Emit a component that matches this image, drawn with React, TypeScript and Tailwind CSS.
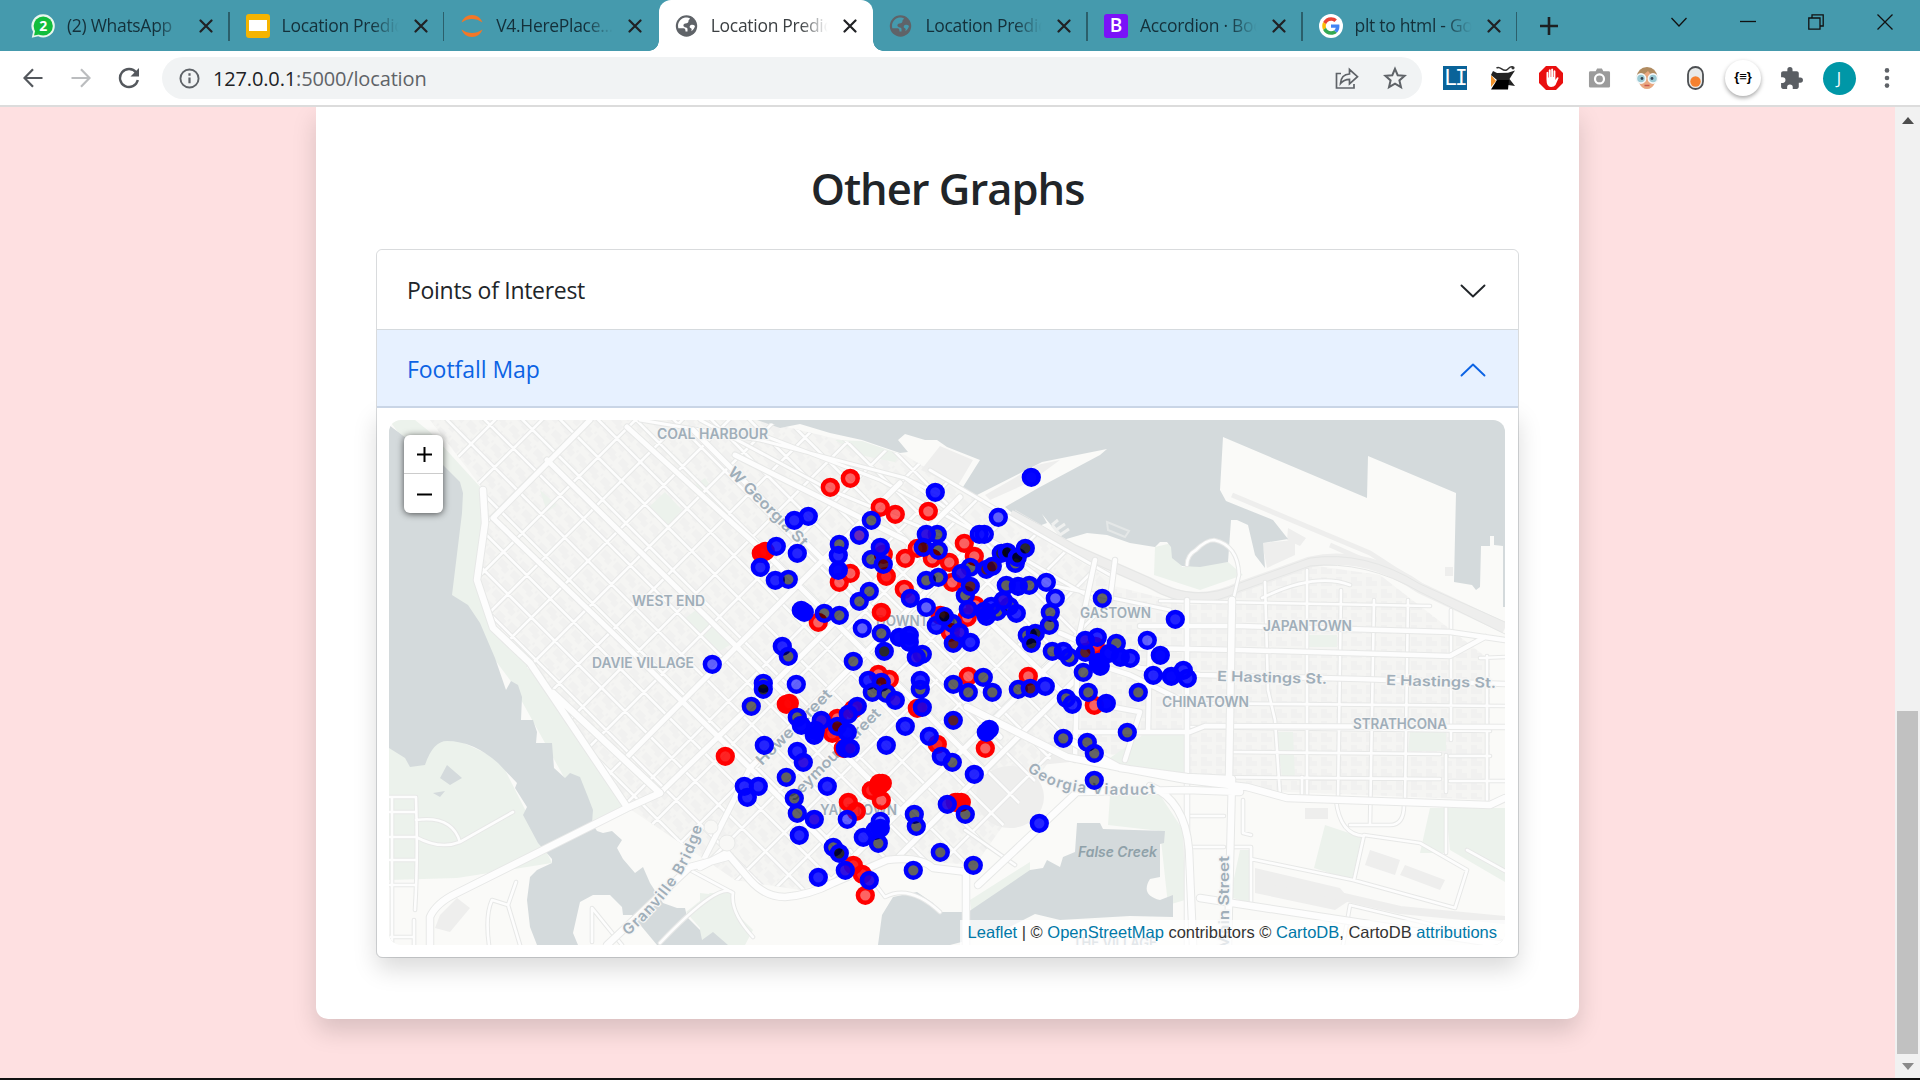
import React from "react";

type Kind = "r" | "R" | "k" | "K" | "b" | "B" | "S" | "P" | "p" | "m";
type Marker = [number, number, Kind];

const STYLE: Record<Kind, { ring: string; fill: string; o: number }> = {
  r: { ring: "#ff0000", fill: "#ff0000", o: 0.6 },
  R: { ring: "#ff0000", fill: "#ff0000", o: 0.86 },
  k: { ring: "#0000ff", fill: "#000000", o: 0.6 },
  K: { ring: "#0000ff", fill: "#000008", o: 0.84 },
  b: { ring: "#0000ff", fill: "#0000ff", o: 0.6 },
  B: { ring: "#0000ff", fill: "#0000ff", o: 0.85 },
  S: { ring: "#0000ff", fill: "#0000ff", o: 0.98 },
  P: { ring: "#0000ff", fill: "#2200dd", o: 0.93 },
  p: { ring: "#0000ff", fill: "#4a00a8", o: 0.82 },
  m: { ring: "#0000ff", fill: "#420010", o: 0.88 },
};

const MARKERS: Marker[] = [
  [830, 487, "r"], [850, 478, "r"], [880, 507, "r"], [895, 514, "r"], [928, 511, "r"], [761, 553, "R"], [765, 551, "R"],
  [839, 582, "r"], [850, 573, "r"], [883, 554, "r"], [886, 576, "R"], [905, 558, "r"], [917, 548, "r"], [932, 558, "r"], [949, 562, "r"],
  [904, 589, "r"], [952, 582, "r"], [881, 612, "R"], [818, 622, "r"], [940, 615, "r"], [964, 543, "r"], [974, 556, "r"],
  [967, 617, "r"], [975, 605, "r"], [950, 632, "r"], [968, 676, "r"], [1028, 676, "r"], [1095, 646, "R"], [878, 674, "r"], [889, 679, "r"],
  [786, 704, "R"], [789, 703, "R"], [837, 718, "r"], [832, 733, "R"], [843, 748, "r"], [725, 756, "R"], [917, 708, "R"],
  [937, 744, "R"], [853, 709, "r"], [871, 790, "R"], [878, 787, "R"], [879, 783, "R"], [882, 783, "R"], [881, 800, "r"],
  [848, 802, "R"], [856, 811, "R"], [955, 802, "R"], [957, 802, "R"], [961, 802, "R"], [853, 865, "R"], [862, 874, "R"],
  [865, 895, "r"], [985, 748, "r"], [1094, 705, "r"],
  [935, 492, "B"], [794, 520, "B"], [808, 516, "B"], [871, 520, "k"], [859, 535, "p"], [776, 546, "B"], [797, 553, "B"],
  [760, 567, "B"], [775, 580, "B"], [788, 579, "k"], [839, 544, "k"], [838, 555, "B"], [838, 570, "S"], [880, 547, "P"],
  [871, 559, "k"], [883, 564, "m"], [937, 534, "k"], [926, 534, "P"], [923, 547, "m"], [938, 550, "k"], [869, 591, "k"],
  [859, 601, "k"], [926, 580, "k"], [938, 577, "k"], [910, 598, "P"], [926, 607, "b"], [801, 610, "S"], [804, 612, "S"],
  [824, 613, "k"], [839, 615, "k"], [862, 628, "b"], [881, 633, "k"], [884, 651, "K"], [899, 637, "S"], [909, 635, "S"],
  [909, 642, "S"], [922, 654, "k"], [916, 657, "P"], [853, 661, "k"], [782, 646, "B"], [788, 656, "k"], [712, 664, "b"],
  [952, 623, "k"], [936, 625, "B"], [944, 616, "K"],
  [1031, 477, "S"], [998, 517, "b"], [984, 534, "b"], [979, 534, "B"], [1001, 553, "K"], [1007, 552, "K"], [1015, 563, "k"],
  [1017, 557, "K"], [1025, 548, "K"], [970, 567, "k"], [961, 573, "P"], [986, 569, "m"], [992, 566, "m"], [965, 595, "k"],
  [970, 586, "m"], [1006, 585, "k"], [1029, 585, "k"], [1018, 586, "S"], [1046, 582, "b"], [1055, 598, "b"], [1050, 612, "k"],
  [1049, 625, "k"], [1102, 598, "k"], [1175, 619, "B"], [1147, 640, "b"], [1160, 655, "S"], [968, 609, "P"], [997, 611, "k"],
  [991, 606, "B"], [986, 616, "S"], [984, 611, "B"], [1009, 606, "k"], [1003, 600, "P"], [1016, 613, "B"], [1027, 635, "k"],
  [1035, 633, "K"], [1031, 643, "K"], [1052, 651, "k"], [1069, 657, "k"], [1063, 651, "B"], [1085, 652, "m"], [1085, 640, "P"],
  [1097, 637, "B"], [1116, 643, "k"], [1109, 653, "S"], [1098, 662, "S"], [1100, 666, "S"], [1120, 657, "S"], [1130, 658, "B"],
  [1083, 672, "k"], [1088, 692, "k"], [1138, 692, "k"], [1153, 675, "B"], [1171, 676, "S"], [1187, 678, "B"], [1183, 670, "B"],
  [953, 643, "m"], [970, 642, "B"], [959, 632, "P"], [920, 689, "k"], [920, 680, "B"], [953, 684, "k"], [983, 677, "k"],
  [968, 692, "k"], [992, 692, "k"], [1018, 689, "k"], [1030, 688, "m"], [1045, 686, "B"], [1066, 698, "k"], [1072, 704, "B"],
  [1106, 703, "S"], [763, 683, "k"], [763, 689, "K"], [796, 684, "b"], [751, 706, "k"], [797, 717, "k"], [801, 725, "S"],
  [821, 720, "P"], [815, 730, "B"], [814, 735, "S"], [857, 706, "P"], [848, 714, "P"], [837, 726, "m"], [847, 732, "S"],
  [845, 748, "S"], [850, 748, "P"], [764, 745, "B"], [797, 751, "B"], [803, 762, "P"], [868, 680, "B"], [881, 682, "m"],
  [872, 692, "k"], [886, 693, "k"], [895, 700, "P"], [922, 707, "P"], [905, 726, "B"], [886, 745, "B"], [929, 736, "B"],
  [952, 762, "k"], [941, 756, "B"], [953, 720, "m"], [786, 777, "k"], [744, 786, "B"], [758, 786, "B"], [747, 797, "B"],
  [794, 798, "k"], [827, 786, "B"], [797, 813, "k"], [814, 819, "P"], [799, 835, "B"], [847, 819, "b"], [880, 821, "b"],
  [880, 828, "S"], [875, 830, "S"], [863, 837, "B"], [878, 843, "k"], [914, 814, "k"], [916, 826, "k"], [947, 804, "P"],
  [833, 847, "k"], [839, 853, "K"], [845, 870, "P"], [869, 880, "P"], [818, 877, "B"], [913, 870, "k"], [940, 852, "k"],
  [974, 774, "B"], [965, 814, "k"], [973, 865, "k"], [1039, 823, "B"], [986, 732, "S"], [989, 729, "S"], [1063, 738, "k"],
  [1087, 742, "k"], [1094, 753, "k"], [1127, 732, "k"], [1094, 780, "k"],
];

/* Street network. Diagonal streets run at 45 degrees through downtown. */
const crossStreets = Array.from({ length: 23 }, (_, i) => 915 + i * 46.8);
const longStreets = Array.from({ length: 26 }, (_, i) => 443 - i * 37.8);
const minorDiagonals =
  crossStreets.map((s) => `M${s - 990} 990L${s - 400} 400`).join("") +
  longStreets.map((d) => `M${400 + d} 400L${990 + d} 990`).join("");
const majorDiagonals =
  "M493 518L590 420M627 757L777 606L900 483M660 793L777 680L960 497M750 768L985 533M493 518L620 640L760 778L870 888M547 460L733 643L905 815M627 427L773 560L985 772M693 430L860 597L1000 737M735 455L905 540L1060 690M840 870L1075 640M880 875L1105 650M700 867L750 768";
const eastStreets =
  "M1160 601L1430 606M1170 703L1505 706M1187 727L1490 731M1230 752L1440 754M1490 756H1450M1187 777L1440 779M1450 781H1505M1265 582L1268 690L1275 720L1280 795M1307 570V795M1341 590L1338 800M1374 600L1370 825M1408 600L1405 800M1451 610V740M1446 755V792M1487 656V803M1302 777V798M1336 800Q1340 835 1364 836M1404 805Q1404 825 1390 825H1350M1446 806V853M1232 847H1251V905M1243 800V833L1251 835M1251 859L1353 880L1455 908L1467 870L1420 843L1364 835L1354 880M1343 945L1350 905L1505 942M1467 850L1505 871M1262 598Q1315 572 1350 585M1187 565Q1187 555 1196 550Q1206 540 1214 540Q1238 545 1239 575L1232 605M1480 658L1505 657M1190 816H1224M1190 847H1224";
const eastMajor =
  "M1140 626L1240 626L1450 632L1505 640M1140 648L1240 650L1450 656L1485 637M1060 633L1140 668L1200 675L1360 679L1505 684M1187 600V945M1020 640L1130 675L1187 703M1095 560L1078 640L1075 760M1115 560L1110 600M1150 640L1148 732M1107 706L1140 712L1125 760M1075 732L1190 732L1205 726L1505 727";
const bigRoads =
  "M430 945V917Q436 903 457 893L627 808L660 793M607 945L690 867L727 857M700 867L727 853L750 880Q765 897 785 897Q810 895 833 883L887 860Q920 856 933 868L967 872M966 870V945M967 707L1067 757L1117 767L1187 780L1247 787L1287 798L1490 805L1505 798M1060 735L1120 768L1187 777L1228 779M1232 779L1228 945M1232 600L1229 779M978 885L1077 792L1187 790L1240 792M1150 786Q1185 800 1189 850L1193 945M483 490L485 523L477 580L493 628L530 663L553 697L627 807M553 693L660 793M1200 898L1505 945";
const sideRoads =
  "M389 797H416Q418 860 415 910M392 797V945M389 812H416M389 837H416M389 860H416M389 885H416M414 945V920M389 937H414M416 820Q452 815 460 842L513 812M416 837Q440 850 460 842M489 945Q485 915 492 900L508 905L520 945M508 905L516 882M592 942V908L622 945M660 943Q720 880 733 893Q730 912 753 937M733 893L690 870M965 830L1015 865M1025 735L1045 748M940 912Q910 884 885 897L850 850";

function Roads({ d, w, clip }: { d: string; w: number; clip?: string }) {
  return (
    <g fill="none" strokeLinecap="round" strokeLinejoin="round" clipPath={clip}>
      <path d={d} stroke="#e7e8e7" strokeWidth={w + 2} />
      <path d={d} stroke="#fdfdfd" strokeWidth={w} />
    </g>
  );
}

function MapLabel({ x, y, w, children, size = 14, rotate = 0, italic = false }: {
  x: number; y: number; w: number; children: string; size?: number; rotate?: number; italic?: boolean;
}) {
  return (
    <text
      x={x} y={y} textLength={w} lengthAdjust="spacingAndGlyphs" fontSize={size} fontWeight={600}
      fontStyle={italic ? "italic" : undefined} fill={italic ? "#8fa1a9" : "#a0aeb9"}
      stroke="#f6f6f5" strokeWidth={italic ? 0 : 2.5} paintOrder="stroke"
      transform={rotate ? `rotate(${rotate} ${x} ${y})` : undefined}
    >
      {children}
    </text>
  );
}

function FootfallMap() {
  return (
    <svg viewBox="389 420 1116 525" className="block h-full w-full" fontFamily="Inter, 'Open Sans', sans-serif">
      <defs>
        <clipPath id="downtown">
          <path d="M430 420H757L905 455L1035 535L1112 580L1090 640L1085 700L1050 760L975 865L900 860L800 890L735 880L627 807L553 697L493 628L477 580L485 523L480 485Z" />
        </clipPath>
        <pattern id="lots" width="17" height="13" patternUnits="userSpaceOnUse" patternTransform="rotate(44)">
          <rect width="17" height="13" fill="#f5f5f3" />
          <path d="M1 1h9v3h4v6h-6v-2H1zM14 0h2v3h-2z" fill="#f1f1f0" />
        </pattern>
        <pattern id="eastLots" width="15" height="12" patternUnits="userSpaceOnUse">
          <rect width="15" height="12" fill="#f5f5f3" />
          <path d="M1 1h6v4h5v5H1z" fill="#f1f1f0" />
        </pattern>
        <path id="viaduct" d="M1027 770Q1050 792 1098 794T1160 793" />
        <path id="granville" d="M628 936Q692 880 704 818" />
      </defs>
      <rect x="389" y="420" width="1116" height="525" fill="#fafaf8" />
      <path d="M430 420H757L905 455L1035 535L1112 580L1090 640L1085 700L1050 760L975 865L900 860L800 890L735 880L627 807L553 697L493 628L477 580L485 523L480 485Z" fill="url(#lots)" />
      <path d="M1090 580L1190 605L1310 565L1380 575L1490 660L1490 800L1240 790L1130 760L1060 740Z" fill="url(#eastLots)" />

      <g fill="#ecf2ec">
        <path d="M389 420H415L430 432L483 490L485 523L477 580L493 628L530 663L553 697L627 807L590 825L560 770L510 680L450 600L460 485L400 435Z" />
        <path d="M389 748L447 735L500 760L552 863L457 878L389 880Z" />
        <path d="M649 507L665 492L682 510L665 528ZM683 620L696 610L733 643L718 652ZM540 490L557 505L547 512ZM695 485L705 478L710 485L698 493Z" />
        <path d="M835 440L862 441L900 454L895 462L860 455ZM1155 547L1172 543L1182 567L1228 562L1243 575L1200 590L1154 575Z" />
        <path d="M1309 635H1337V647H1309ZM1410 732H1446V751H1408ZM1276 732H1293L1295 778L1282 776ZM1107 760L1146 733H1187V775H1140Z" />
        <path d="M1110 795H1160L1183 830L1185 900L1168 905L1160 831L1108 825ZM1325 825L1364 838L1354 881L1314 868ZM1446 808H1505V882L1450 850ZM1430 808H1446V853H1420ZM1240 850H1249V903L1230 897Z" />
        <path d="M686 912L710 893L732 893L735 912L753 930L745 945H728L700 928ZM970 900L1030 862L1030 872L972 918ZM700 893L735 897V945H700Z" />
      </g>

      <g fill="#eeeeed">
        <ellipse cx="1010" cy="797" rx="34" ry="31" />
        <path d="M921 470L940 446L973 460L957 487ZM1037 465L1060 460L1030 482L990 500L985 495ZM1262 543L1295 540V555L1267 568ZM1445 567H1453V576H1445ZM1288 528L1306 538L1300 546L1287 540ZM1305 808H1328V819H1305ZM1255 868L1340 888L1350 900L1335 910L1255 893ZM1370 850L1400 860L1395 875L1365 865ZM1405 865L1445 880L1440 890L1400 875ZM1040 745L1070 735L1090 760L1040 765Z" />
        <path d="M440 915L457 898L470 908L450 932L435 928Z" />
      </g>

      <g fill="#d4dadc">
        <path d="M389 425L402 435L443 465L460 482L463 493L462 513L452 595L468 605L480 623L495 658L506 690L511 681L518 685L522 697L521 720L533 720L537 732L536 743L552 743L554 768L565 778L570 773L580 777L588 797L593 810L592 823L597 831L603 833L612 831L622 840L617 848L623 859L635 873L643 867L650 883L663 903L677 908L685 908L687 917L700 930L702 940L713 932L728 945H657L632 915H623L622 907L610 895H593L580 902L573 933L578 945H537L530 927L527 900L530 877L537 870L552 863V859L538 843L523 815L527 807L515 788L517 783L498 763Q473 741 447 741Q433 741 425 765L410 767L405 758L389 748Z" />
        <path d="M757 420L780 428L800 424L830 433L862 440L900 453L908 452L898 440L905 434L925 440L937 440L947 447L980 460L963 487L968 493L977 495L1042 462L1107 449L1100 455L1040 487L1005 507L1023 522L1033 528L1047 523L1042 514L1063 540L1087 533L1107 535L1130 543L1155 547L1160 542H1167L1171 547L1172 558L1182 566L1200 567L1228 562L1231 520H1237L1248 525L1255 555L1265 568L1263 543L1288 539L1273 520L1226 501L1220 490L1223 437L1367 498L1368 456L1456 493L1454 582L1472 585L1476 590L1480 587L1481 546H1490V536H1494V545L1503 546V607H1505V420Z" />
        <path d="M1077 823H1100L1103 829L1165 831L1164 843L1160 844V877L1150 879Q1140 895 1160 900L1173 895V917L1130 916L1060 920L1035 914L1000 932L950 945H878L882 915L893 897L917 892L933 903L940 912H968L1030 870L1043 868L1047 860L1060 867L1063 857L1075 852Z" />
        <path d="M440 778L447 765L462 778L450 785ZM433 793L445 791L440 797Z" />
      </g>
      <path d="M1052 525L1058 520M1056 530L1065 524M1060 535L1069 529M1052 525L1061 536" stroke="#eff0ef" strokeWidth="3" />
      <path d="M1107 522L1129 531L1125 537L1108 530Z" fill="none" stroke="#e4e7e7" strokeWidth="2" />

      <g fill="none" stroke="#eeeeed" strokeLinejoin="round">
        <path d="M1010 515L1075 550L1150 583Q1195 610 1240 587L1310 562Q1365 550 1420 588L1505 628" strokeWidth="11" />
        <path d="M1232 495L1370 553L1430 592L1480 616M1330 545L1375 565" strokeWidth="5" />
        <path d="M1270 880L1400 910L1505 920" strokeWidth="8" />
      </g>
      <g fill="none" stroke="#e5e6e5">
        <path d="M1015 510L1075 545L1150 578Q1195 605 1240 583L1310 558Q1365 550 1420 584L1505 622" strokeWidth="1" />
        <path d="M1030 530L1075 555L1150 588Q1195 615 1240 591L1310 566Q1365 560 1420 592L1505 634" strokeWidth="1" />
      </g>

      <Roads d={minorDiagonals} w={2.6} clip="url(#downtown)" />
      <Roads d={eastStreets} w={2.6} />
      <Roads d={sideRoads} w={2.6} />
      <Roads d={"M700 420L830 490L940 535M757 433L880 480L1000 545L1095 600M640 420L760 440L905 478L1050 585L1170 610M905 478L940 495M930 470L1040 535L1110 575"} w={3} />
      <Roads d={majorDiagonals} w={5} clip="url(#downtown)" />
      <Roads d={eastMajor} w={4.5} />
      <Roads d={bigRoads} w={6.5} />
      <g fill="#f8f8f6" stroke="#e9eae9" strokeWidth="1">
        <circle cx="711" cy="827" r="7" />
        <circle cx="727" cy="843" r="8" />
      </g>

      <MapLabel x={657} y={439} w={111}>COAL HARBOUR</MapLabel>
      <MapLabel x={632} y={606} w={73}>WEST END</MapLabel>
      <MapLabel x={592} y={668} w={102}>DAVIE VILLAGE</MapLabel>
      <MapLabel x={876} y={626} w={86}>DOWNTOWN</MapLabel>
      <MapLabel x={1080} y={618} w={71}>GASTOWN</MapLabel>
      <MapLabel x={1263} y={631} w={89}>JAPANTOWN</MapLabel>
      <MapLabel x={1162} y={707} w={87}>CHINATOWN</MapLabel>
      <MapLabel x={1353} y={729} w={94}>STRATHCONA</MapLabel>
      <MapLabel x={820} y={815} w={77}>YALETOWN</MapLabel>
      <MapLabel x={1073} y={948} w={84}>THE VILLAGE</MapLabel>
      <MapLabel x={1217} y={681} w={110} rotate={1.5}>E Hastings St.</MapLabel>
      <MapLabel x={1386} y={685} w={110} rotate={1.5}>E Hastings St.</MapLabel>
      <MapLabel x={727} y={473} w={106} size={15} rotate={45}>W Georgia St</MapLabel>
      <MapLabel x={762} y={766} w={100} size={15} rotate={-45}>Howe Street</MapLabel>
      <MapLabel x={794} y={802} w={124} size={15} rotate={-45}>Seymour Street</MapLabel>
      <MapLabel x={1229} y={950} w={94} rotate={-90}>Main Street</MapLabel>
      <MapLabel x={1078} y={857} w={79} italic>False Creek</MapLabel>
      <text fontSize="15" fontWeight="600" fill="#a0aeb9" stroke="#f6f6f5" strokeWidth="2.5" paintOrder="stroke">
        <textPath href="#viaduct" textLength="134" lengthAdjust="spacing">Georgia Viaduct</textPath>
      </text>
      <text fontSize="15" fontWeight="600" fill="#a0aeb9" stroke="#f6f6f5" strokeWidth="2.5" paintOrder="stroke">
        <textPath href="#granville" textLength="134" lengthAdjust="spacing">Granville Bridge</textPath>
      </text>

      {MARKERS.map(([x, y, kind], i) => {
        const s = STYLE[kind];
        return <circle key={i} cx={x + 0.3} cy={y + 0.3} r="7.4" fill={s.fill} fillOpacity={s.o} stroke={s.ring} strokeWidth="4.5" />;
      })}
    </svg>
  );
}

/* ---------- Tab strip ---------- */

const WhatsAppIcon = () => (
  <svg viewBox="0 0 24 24" className="h-6 w-6">
    <path d="M12.2.3a11.5 11.5 0 0 1 0 23.2 12 12 0 0 1-5-1.2L.8 23.8l1.3-6A11.6 11.6 0 0 1 12.2.3z" fill="#e9f7ee" />
    <circle cx="12.2" cy="12" r="9.6" fill="#12bd3c" />
    <path d="M3 21.5l1.2-5 4 4z" fill="#12bd3c" />
    <text x="12.2" y="17" textAnchor="middle" fontSize="14" fontWeight="700" fill="#fff" fontFamily="Open Sans, sans-serif">2</text>
  </svg>
);
const SlidesIcon = () => (
  <span className="flex h-6 w-6 items-center justify-center rounded-[3px] bg-[#f5b400]">
    <span className="h-[11px] w-[18px] bg-white" />
  </span>
);
const JupyterIcon = () => (
  <svg viewBox="0 0 24 24" className="h-6 w-6" fill="#f37726">
    <path d="M1.5 8.500C3 4 7 1 12 1s9 3 10.500 7.500C19 6 15.500 5 12 5S5 6 1.500 8.500zM1.500 15.500C3 20 7 23 12 23s9-3 10.500-7.500C19 18 15.500 19 12 19s-7-1-10.500-3.500z" />
  </svg>
);
const GlobeIcon = () => (
  <svg viewBox="0 0 24 24" className="h-6 w-6">
    <circle cx="11.500" cy="12" r="10.700" fill="#5f6368" />
    <path d="M10 3.500c-4 .8-7 4.400-7 8.500l.3 2.200h5.200c1.800 0 2 1.600 2 3.300h2v-2.400c0-1.400-1.200-1.600-2.600-1.900-1.800-.4-2.200-3 .4-3.600 2.200-.5 3.300-1 3.200-2.800 0-1 1.500-1.200 1.500-2.200C13.500 3.500 12 3.300 10 3.500zM16 11c-1.500.5-1.800 2.500-.5 3 1.300.4 1.500 1.500.7 3.300 1.900-1.300 3.400-3.200 3.800-5.400-1-.9-2.600-1.400-4-.9z" fill="currentColor" />
  </svg>
);
const BootstrapIcon = () => (
  <span className="flex h-6 w-6 items-center justify-center rounded-[3px] bg-[#7a12f8] font-['Open_Sans'] text-[19px] leading-none font-semibold text-white">B</span>
);
const GoogleIcon = () => (
  <svg viewBox="0 0 24 24" className="h-6 w-6">
    <circle cx="12" cy="12" r="12" fill="#fff" />
    <g transform="translate(3.200 3.200) scale(.367)">
      <path fill="#EA4335" d="M24 9.500c3.540 0 6.710 1.220 9.210 3.600l6.850-6.850C35.900 2.380 30.470 0 24 0 14.620 0 6.510 5.380 2.560 13.220l7.980 6.190C12.430 13.720 17.740 9.500 24 9.500z" />
      <path fill="#4285F4" d="M46.980 24.550c0-1.570-.15-3.090-.38-4.550H24v9.020h12.940c-.58 2.960-2.260 5.480-4.780 7.180l7.730 6c4.510-4.180 7.090-10.360 7.090-17.650z" />
      <path fill="#FBBC05" d="M10.530 28.590c-.48-1.450-.76-2.990-.76-4.590s.27-3.140.76-4.590l-7.980-6.190C.92 16.460 0 20.120 0 24s.92 7.540 2.560 10.780l7.970-6.190z" />
      <path fill="#34A853" d="M24 48c6.480 0 11.930-2.130 15.890-5.810l-7.730-6c-2.150 1.450-4.920 2.300-8.160 2.300-6.260 0-11.570-4.220-13.470-9.910l-7.980 6.190C6.510 42.620 14.620 48 24 48z" />
    </g>
  </svg>
);

interface TabInfo { title: string; icon: React.ReactNode; active?: boolean; divider?: boolean }
const TABS: TabInfo[] = [
  { title: "(2) WhatsApp", icon: <WhatsAppIcon />, divider: true },
  { title: "Location Prediction", icon: <SlidesIcon />, divider: true },
  { title: "V4.HerePlace...", icon: <JupyterIcon /> },
  { title: "Location Prediction", icon: <GlobeIcon />, active: true },
  { title: "Location Prediction", icon: <GlobeIcon />, divider: true },
  { title: "Accordion · Bootstrap", icon: <BootstrapIcon />, divider: true },
  { title: "plt to html - Google", icon: <GoogleIcon />, divider: true },
];

function Tab({ title, icon, active, divider }: TabInfo) {
  return (
    <div className={`relative flex h-[51px] w-[214.6px] shrink-0 items-center pl-[16px] ${active ? "rounded-t-xl bg-white text-white" : "text-[#459aad]"}`}>
      {active && (
        <>
          <span className="absolute bottom-0 -left-[10px] h-[10px] w-[10px] bg-[radial-gradient(circle_at_0_0,transparent_9.5px,white_10px)]" />
          <span className="absolute -right-[10px] bottom-0 h-[10px] w-[10px] bg-[radial-gradient(circle_at_100%_0,transparent_9.5px,white_10px)]" />
        </>
      )}
      <span className="shrink-0">{icon}</span>
      <span className={`ml-3 w-[119px] overflow-hidden text-[17.500px] tracking-[-0.300px] whitespace-nowrap [mask-image:linear-gradient(to_right,black_75%,transparent_98%)] ${active ? "text-[#3c4043]" : "text-[#14303a]"}`}>
        {title}
      </span>
      <svg viewBox="0 0 14 14" className="ml-[13px] h-[14px] w-[14px]" stroke="#202124" strokeWidth="2.200" strokeLinecap="round">
        <path d="M1.500 1.500l11 11M12.500 1.500l-11 11" />
      </svg>
      {divider && <span className="absolute top-3 right-0 h-[29px] w-[1.500px] bg-[#2b5f6b]" />}
    </div>
  );
}

function TabStrip() {
  return (
    <div className="flex h-[51px] bg-[#459aad] pl-[15px]">
      {TABS.map((t, i) => <Tab key={i} {...t} />)}
      <svg viewBox="0 0 18 18" className="mt-[17px] ml-[23px] h-[18px] w-[18px]" stroke="#1d2022" strokeWidth="2.600"><path d="M9 0v18M0 9h18" /></svg>
      <div className="mt-[14px] ml-auto flex gap-[52.600px] pr-[27px]">
        <svg viewBox="0 0 16 16" className="h-4 w-4" fill="none" stroke="#111" strokeWidth="1.300"><path d="M.5 4L8 12l7.500-8" /></svg>
        <svg viewBox="0 0 16 16" className="h-4 w-4" stroke="#111" strokeWidth="1.300"><path d="M0 7.500h16" /></svg>
        <svg viewBox="0 0 16 16" className="h-4 w-4" fill="none" stroke="#111" strokeWidth="1.300"><path d="M.8 4h11.200v11.200H.8zM4 4V.8h11.200V12H12" /></svg>
        <svg viewBox="0 0 16 16" className="h-4 w-4" fill="none" stroke="#111" strokeWidth="1.300"><path d="M.5.500l15 15M15.500.500l-15 15" /></svg>
      </div>
    </div>
  );
}

/* ---------- Toolbar ---------- */

function Slot({ children }: { children: React.ReactNode }) {
  return <span className="flex h-10 w-12 shrink-0 items-center justify-center">{children}</span>;
}

function Toolbar() {
  return (
    <div className="flex h-[56px] items-center border-b-2 border-[#dcdcdc] bg-white pl-[9px]">
      <Slot>
        <svg viewBox="0 0 20 20" className="h-5 w-5" fill="none" stroke="#54585d" strokeWidth="2.200"><path d="M19.500 10H2M10 1.200L1.500 10l8.500 8.800" /></svg>
      </Slot>
      <Slot>
        <svg viewBox="0 0 20 20" className="h-5 w-5" fill="none" stroke="#bbbdbf" strokeWidth="2.200"><path d="M.5 10H18M10 1.200L18.500 10 10 18.800" /></svg>
      </Slot>
      <Slot>
        <svg viewBox="0 0 22 22" className="h-[22px] w-[22px]" fill="none" stroke="#54585d" strokeWidth="2.400">
          <path d="M18.200 5.600A9 9 0 1 0 19.800 13" /><path d="M21 1v8.500h-8.500z" fill="#54585d" stroke="none" />
        </svg>
      </Slot>
      <div className="ml-[9px] flex h-[42px] w-[1260px] items-center rounded-full bg-[#f1f3f4] pl-[17px]">
        <svg viewBox="0 0 22 22" className="h-[21px] w-[21px]" fill="none" stroke="#5f6368" strokeWidth="2"><circle cx="11" cy="11" r="9.500" /><path d="M11 10v6M11 5.500v2.500" strokeWidth="2.300" /></svg>
        <span className="mt-px ml-[13px] text-[20px] tracking-[-0.150px] text-[#5f6368]"><span className="text-[#202124]">127.0.0.1</span>:5000/location</span>
        <svg viewBox="0 0 24 24" className="mr-[24px] ml-auto h-6 w-6" fill="none" stroke="#5f6368" strokeWidth="1.700">
          <path d="M6 7.500H1.500v14.500h17.500v-4M5.500 17.500c.4-6 3.600-9.300 9-9.500V3.500l8 7.200-8 7.200v-4.600c-4 0-6.600 1.200-9 4.200z" />
        </svg>
        <svg viewBox="0 0 24 24" className="mr-[15px] h-6 w-6" fill="none" stroke="#5f6368" strokeWidth="2"><path d="M12 2.800l2.700 6.400 6.900.6-5.200 4.600 1.600 6.800-6-3.600-6 3.600 1.600-6.800-5.200-4.600 6.900-.6z" /></svg>
      </div>
      <div className="ml-[9px] flex">
        <Slot>
          <span className="flex h-6 w-6 items-center justify-center bg-[#0a6399] font-['DejaVu_Sans_Mono'] text-[21px] leading-none tracking-[-2px] text-white">LI</span>
        </Slot>
        <Slot>
          <svg viewBox="0 0 24 24" className="h-6 w-6">
            <path d="M0 9l5 6-5 6z" fill="#f0922b" />
            <path d="M2 5l4 2 11-.2 7-2.300L21 9l-2.500 4L24 20l-7-1-1 2-13-.3L6 14 0 9z" fill="#222" />
            <path d="M0 23.500L6 14h12l-1 9.500z" fill="#000" />
            <path d="M5.500 2c4-2.500 6 4 10 2 2.500-1.500 3-4 6.500-3" fill="none" stroke="#333" strokeWidth="1.500" /><circle cx="22" cy="1.800" r="1.600" fill="#333" />
          </svg>
        </Slot>
        <Slot>
          <svg viewBox="0 0 24 24" className="h-6 w-6">
            <path d="M7 0h10l7 7v10l-7 7H7l-7-7V7z" fill="#e90f0f" />
            <path d="M7.500 13.500V6.500q1-1.400 1.800 0v5h.5V4q1-1.400 1.900 0v7h.5V3.300q1-1.400 1.900 0V11h.5V5q1-1.300 1.800 0v9l1.600-2.500q1.200-.8 1.600.4L16.500 19q-1.500 2-4.500 2-4.500 0-4.500-7.500z" fill="#fff" />
          </svg>
        </Slot>
        <Slot>
          <svg viewBox="0 0 24 22" className="h-[22px] w-[23px]"><path d="M2.500 4H8l1.500-3h5L16 4h5.500a1.500 1.500 0 0 1 1.500 1.500v14a1.500 1.500 0 0 1-1.500 1.500h-19A1.500 1.500 0 0 1 1 19.500v-14A1.500 1.500 0 0 1 2.500 4z" fill="#9b9b9b" /><circle cx="12" cy="12" r="4.700" fill="none" stroke="#fff" strokeWidth="2.300" /></svg>
        </Slot>
        <Slot>
          <svg viewBox="0 0 24 24" className="h-6 w-6">
            <path d="M12 1q9 .5 10.500 10l-2 4h-17l-2-4Q3 1.500 12 1z" fill="#b08b60" />
            <path d="M4 11Q9 9 13 5q3 4.500 7 6v6q-3 6-8 6t-8-6z" fill="#e9a880" />
            <g fill="#9ccbd5" stroke="#f4f8fa" strokeWidth="1.600"><circle cx="6" cy="12.500" r="4.600" /><circle cx="18" cy="12.500" r="4.600" /></g>
            <circle cx="7" cy="12.500" r="1.400" fill="#345" /><circle cx="17" cy="12.500" r="1.400" fill="#345" />
            <path d="M9.500 19.500h5" stroke="#c8574e" strokeWidth="1.500" />
          </svg>
        </Slot>
        <Slot>
          <svg viewBox="0 0 17 24" className="h-6 w-[17px]"><rect x="1" y="1" width="15" height="22" rx="7.500" fill="#e9ebea" stroke="#4c4f52" strokeWidth="1.800" /><circle cx="8.500" cy="15.500" r="5.200" fill="#f5812f" /></svg>
        </Slot>
        <Slot>
          <span className="flex h-9 w-9 shrink-0 items-center justify-center rounded-full bg-white pb-0.5 font-['Liberation_Sans'] text-[13px] font-bold text-black shadow-[0_2px_4px_rgba(0,0,0,0.350)]">{"{≡}"}</span>
        </Slot>
        <Slot>
          <svg viewBox="0 0 24 24" className="h-[25px] w-[25px]" fill="#5a5e63"><path d="M20.500 11H19V7c0-1.100-.9-2-2-2h-4V3.500a2.500 2.500 0 0 0-5 0V5H4c-1.100 0-2 .9-2 2v3.800h1.500a2.700 2.700 0 0 1 0 5.400H2V20c0 1.100.9 2 2 2h3.800v-1.500a2.700 2.700 0 0 1 5.400 0V22H17c1.100 0 2-.9 2-2v-4h1.500a2.500 2.500 0 0 0 0-5z" /></svg>
        </Slot>
        <Slot>
          <span className="flex h-[33px] w-[33px] items-center justify-center rounded-full bg-[#0097a7] text-[16px] text-white">J</span>
        </Slot>
        <Slot>
          <svg viewBox="0 0 6 20" className="h-5 w-[6px]" fill="#5f6368"><circle cx="3" cy="2.400" r="2.300" /><circle cx="3" cy="10" r="2.300" /><circle cx="3" cy="17.600" r="2.300" /></svg>
        </Slot>
      </div>
    </div>
  );
}

/* ---------- Page ---------- */

function Chevron({ up }: { up?: boolean }) {
  return (
    <svg viewBox="0 0 26 14" className="h-[14px] w-[26px]" fill="none" stroke={up ? "#0c63e4" : "#212529"} strokeWidth="1.900" strokeLinecap="round" strokeLinejoin="round">
      <path d={up ? "M1.500 12.500L13 1.500l11.500 11" : "M1.500 1.500L13 12.500l11.500-11"} />
    </svg>
  );
}

function Link({ children }: { children: string }) {
  return <a className="text-[#0078a8]">{children}</a>;
}

export default function App() {
  return (
    <div className="flex h-[1080px] w-[1920px] flex-col overflow-hidden bg-[#111] font-['Open_Sans','Noto_Sans',sans-serif]">
      <TabStrip />
      <Toolbar />
      <div className="flex h-[971px] bg-[#fee0e1]">
        <main className="flex flex-1 items-start justify-center overflow-hidden">
          <section className="h-[912px] w-[1263px] rounded-b-xl bg-white px-[60px] shadow-[0_12px_24px_rgba(0,0,0,0.150)]">
            <h2 className="mt-[52px] text-center text-[43.500px] leading-[60px] font-semibold tracking-[-1px] text-[#212529]">Other Graphs</h2>
            <div className="mt-[30px] flex h-[709px] flex-col rounded-md border border-[#d9dbdd]">
              <div className="flex h-[79px] items-center justify-between rounded-t-md bg-white pt-0.5 pr-[32px] pl-[30px] text-[23px] tracking-[-0.300px] text-[#212529]">
                <span>Points of Interest</span>
                <Chevron />
              </div>
              <div className="relative z-10 flex h-[79px] items-center justify-between border-t border-b-2 border-t-[#d5dade] border-b-[#c9d5e6] bg-[#e7f1ff] pt-[3px] pr-[32px] pl-[30px] text-[23px] tracking-[-0.050px] text-[#0c63e4]">
                <span>Footfall Map</span>
                <Chevron up />
              </div>
              <div className="flex-1 rounded-b-md bg-white px-3 pt-3 shadow-[0_12px_24px_rgba(0,0,0,0.150)]">
                <div className="relative h-[525px] w-[1116px] overflow-hidden rounded-xl">
                  <FootfallMap />
                  <div className="absolute top-[15px] left-[15px] flex h-[78px] w-[39px] flex-col rounded-md bg-white shadow-[0_1px_7px_rgba(0,0,0,0.650)]">
                    <span className="flex h-[39px] items-center justify-center border-b border-[#ccc] pl-0.5">
                      <svg viewBox="0 0 15 15" className="h-[15px] w-[15px]" stroke="#000" strokeWidth="2"><path d="M7.500 0v15M0 7.500h15" /></svg>
                    </span>
                    <span className="flex flex-1 items-center justify-center pt-0.5 pl-0.5">
                      <svg viewBox="0 0 15 15" className="h-[15px] w-[15px]" stroke="#000" strokeWidth="2"><path d="M0 7.500h15" /></svg>
                    </span>
                  </div>
                  <div className="absolute right-0 bottom-0 h-[25px] bg-white/70 px-[8px] font-['Liberation_Sans'] text-[16.500px] leading-[25px] whitespace-nowrap text-[#333]">
                    <Link>Leaflet</Link> | © <Link>OpenStreetMap</Link> contributors © <Link>CartoDB</Link>, CartoDB <Link>attributions</Link>
                  </div>
                </div>
              </div>
            </div>
          </section>
        </main>
        <aside className="flex w-[25px] flex-col items-center bg-[#f1f1f1]">
          <svg viewBox="0 0 12 7" className="mt-[10px] h-[7px] w-[12px]" fill="#4d4d4d"><path d="M6 0l6 7H0z" /></svg>
          <div className="mt-[587px] h-[343px] w-[21px] bg-[#c1c1c1]" />
          <svg viewBox="0 0 12 7" className="mt-[9px] h-[7px] w-[12px]" fill="#8a8a8a"><path d="M6 7l6-7H0z" /></svg>
        </aside>
      </div>
    </div>
  );
}
